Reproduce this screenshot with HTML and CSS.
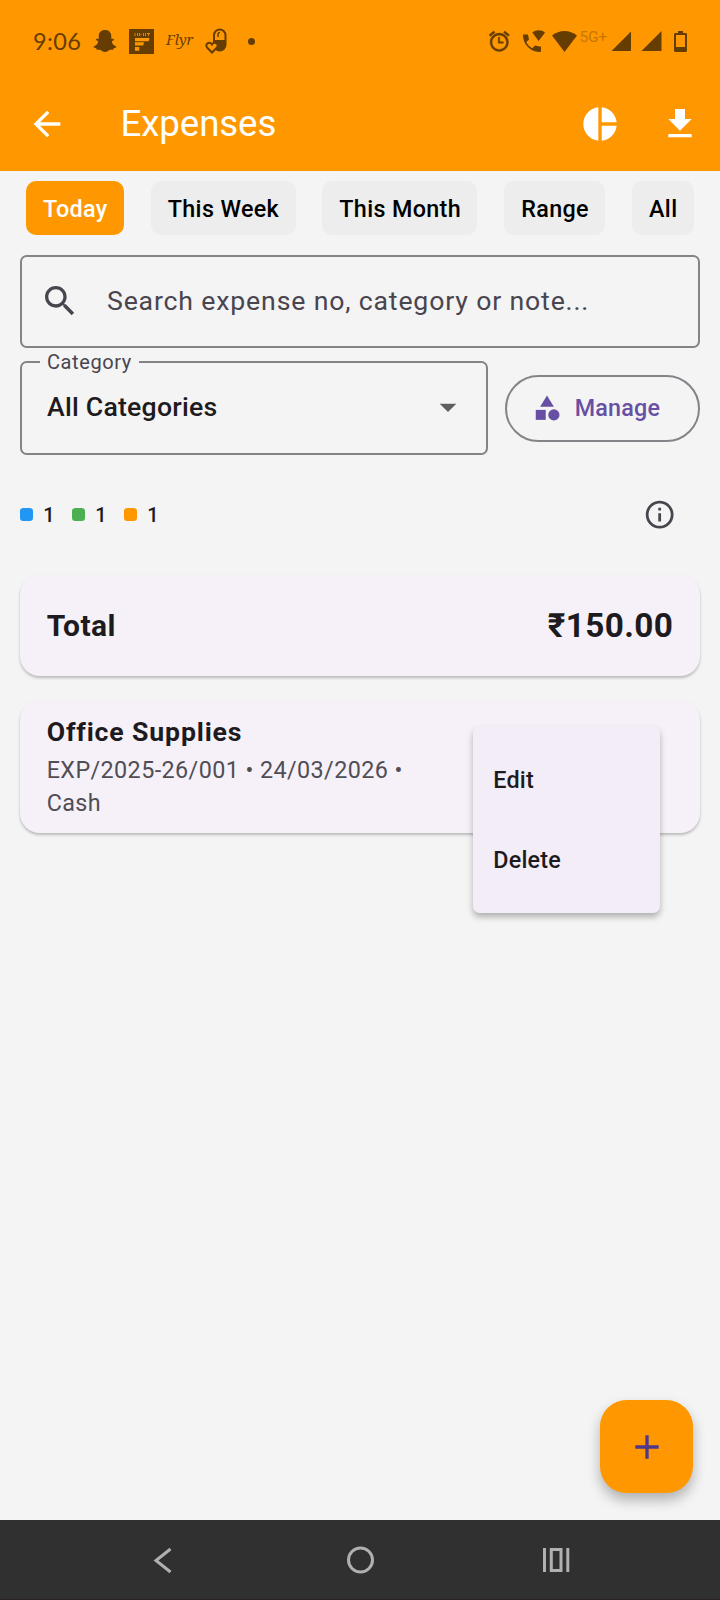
FILE: index.html
```html
<!DOCTYPE html>
<html lang="en">
<head>
<meta charset="utf-8">
<title>Expenses</title>
<link rel="stylesheet" href="styles.css">
</head>
<body>
<div class="screen">
  <header class="top">
    <div class="status">
      <div class="status-left">
        <span class="clock">9:06</span>
        <svg class="ghost" width="24" height="24" viewBox="0 0 24 24"><path d="M12 1c-4 0-6.300 2.700-6.300 6.300v2.500c-1 .5-2.200-.5-2.700.4-.5 1 1.800 1.500 2.100 2.400.4 1.500-2 4.200-4.300 4.800-.8.400-.2 1.200 2.300 1.900.5.200.2 1.400 1 1.500.8.100 2-.3 3.300.2 1.400.600 2.200 2 4.600 2s3.200-1.400 4.600-2c1.300-.5 2.500-.1 3.300-.2.800-.1.500-1.300 1-1.500 2.500-.7 3.100-1.500 2.300-1.900-2.300-.6-4.700-3.300-4.300-4.800.3-.9 2.600-1.400 2.100-2.400-.5-.9-1.700.1-2.700-.4V7.300C18.300 3.700 16 1 12 1z"/></svg>
        <svg class="first" width="25" height="25" viewBox="0 0 25 25"><path d="M0 0h25v25H0z"/><path class="cut" d="M6 9h14.500l-.8 3.300H6zM6 13.300h9l-.8 3.200H6zM6 18h4.200v3.700H6z"/><path class="teeth" d="M6 4v3M8.500 4v3M10.500 4v3M11.500 5.500h1M14.500 4v3M16.500 4v3M18 4.500h3M19.500 4v3"/></svg>
        <span class="flyr">Flyr</span>
        <svg class="pill" width="22" height="26" viewBox="0 0 22 26"><rect class="line" x="9" y="1.500" width="11.500" height="21" rx="5.700"/><path d="M9 12h11.500v5c0 8-11.500 8-11.500 0z"/><path class="thin" d="M13 9V6.500q0-2 2-2"/><path class="heart" d="M7 24.500l-5-5c-2.500-3.500 2.500-6.500 5-3 2.500-3.500 7.500-.5 5 3z"/></svg>
        <i class="dot"></i>
      </div>
      <div class="status-right">
        <svg class="alarm" width="24.500" height="24.500" viewBox="0 0 24 24"><path d="M22 5.720l-4.600-3.860-1.290 1.530 4.600 3.860L22 5.720zM7.880 3.390L6.600 1.860 2 5.710l1.290 1.530 4.590-3.850zM12.500 8H11v6h5v-1.500h-3.500V8zM12 4c-4.970 0-9 4.030-9 9s4.020 9 9 9c4.970 0 9-4.030 9-9s-4.030-9-9-9zm0 16c-3.870 0-7-3.130-7-7s3.130-7 7-7 7 3.130 7 7-3.130 7-7 7z"/></svg>
        <svg class="call" width="23" height="23" viewBox="0 0 23 23"><path d="M1 4.500h5l1 5-2.700 2.500c1.500 3 3.200 4.800 6 6.300l2.700-2.800 6 1.300v5C9 23 .5 14 1 4.500z"/><path d="M10.300 2.500c3.800-3 9-3 12.700 0L16.600 11z"/></svg>
        <svg class="wifi" width="25" height="21" viewBox="0 0 25 21"><path d="M0 4.500c7.500-6 17.500-6 25 0L12.500 21z"/></svg>
        <span class="net">5G+</span>
        <svg class="sig" width="20.500" height="20.500" viewBox="0 0 20 20"><path d="M0 20h20V0z"/></svg>
        <svg class="sig2" width="20.500" height="20.500" viewBox="0 0 20 20"><path d="M0 20h20V0z"/></svg>
        <svg class="battery" width="13" height="21" viewBox="0 0 13 21"><path fill-rule="evenodd" d="M4 0h5v2h3l1 1v17l-1 1H1l-1-1V3l1-1h3zM2 4v12h9V4z"/></svg>
      </div>
    </div>
    <div class="appbar">
      <svg class="icon back" viewBox="0 0 24 24"><path d="M20 11H7.830l5.590-5.590L12 4l-8 8 8 8 1.410-1.410L7.830 13H20v-2z"/></svg>
      <h1 class="title">Expenses</h1>
      <svg class="icon pie" viewBox="0 0 24 24"><path d="M11 2v20c-5.070-.5-9-4.790-9-10s3.930-9.500 9-10zm2.030 0v8.990H22c-.47-4.740-4.240-8.520-8.970-8.990zm0 11.010V22c4.740-.47 8.500-4.250 8.970-8.990h-8.970z"/></svg>
      <svg class="icon" viewBox="0 0 24 24"><path d="M5 20h14v-2H5v2zM19 9h-4V3H9v6H5l7 7 7-7z"/></svg>
    </div>
  </header>

  <main class="content">
    <div class="chips">
      <span class="chip chip-on">Today</span>
      <span class="chip">This Week</span>
      <span class="chip">This Month</span>
      <span class="chip">Range</span>
      <span class="chip">All</span>
    </div>

    <div class="search">
      <svg class="icon" viewBox="0 0 24 24"><path d="M15.500 14h-.79l-.28-.27C15.410 12.590 16 11.110 16 9.500 16 5.910 13.090 3 9.500 3S3 5.910 3 9.500 5.910 16 9.500 16c1.610 0 3.090-.59 4.230-1.570l.27.28v.79l5 4.990L20.490 19l-4.990-5zm-6 0C7.010 14 5 11.990 5 9.500S7.010 5 9.500 5 14 7.010 14 9.500 11.990 14 9.500 14z"/></svg>
      <span class="hint">Search expense no, category or note...</span>
    </div>

    <div class="filters">
      <div class="select">
        <span class="select-label">Category</span>
        <span class="select-value">All Categories</span>
        <svg class="icon" viewBox="0 0 24 24"><path d="M7 10l5 5 5-5z"/></svg>
      </div>
      <div class="manage">
        <svg class="icon-sm" viewBox="0 0 24 24"><path d="M12 2l-5.500 9h11z"/><circle cx="17.500" cy="17.500" r="4.500"/><path d="M3 13.500h8v8H3z"/></svg>
        <span>Manage</span>
      </div>
    </div>

    <div class="legend">
      <span class="key"><i class="swatch blue"></i>1</span>
      <span class="key"><i class="swatch green"></i>1</span>
      <span class="key"><i class="swatch orange"></i>1</span>
      <svg class="info" viewBox="0 0 24 24"><path d="M11 7h2v2h-2zm0 4h2v6h-2zm1-9C6.480 2 2 6.480 2 12s4.480 10 10 10 10-4.480 10-10S17.520 2 12 2zm0 18c-4.410 0-8-3.590-8-8s3.590-8 8-8 8 3.590 8 8-3.590 8-8 8z"/></svg>
    </div>

    <section class="card total">
      <span class="total-label">Total</span>
      <span class="total-sum">₹150.00</span>
    </section>

    <section class="card entry">
      <h2 class="entry-title">Office Supplies</h2>
      <p class="entry-meta">EXP/2025-26/001 • 24/03/2026 • Cash</p>
      <div class="menu">
        <div class="menu-item">Edit</div>
        <div class="menu-item">Delete</div>
      </div>
    </section>
  </main>

  <div class="fab"><svg class="icon" viewBox="0 0 24 24"><path d="M19 13h-6v6h-2v-6H5v-2h6V5h2v6h6v2z"/></svg></div>

  <nav class="nav">
    <svg width="30" height="30" viewBox="0 0 30 30"><path d="M21.500 4L7 15.500 21.500 27"/></svg>
    <svg width="30" height="30" viewBox="0 0 30 30"><circle cx="14.500" cy="15" r="12"/></svg>
    <svg width="30" height="30" viewBox="0 0 30 30"><path d="M2.500 3v24M25.800 3v24M9.300 4.500h9.700v21H9.300z"/></svg>
  </nav>
</div>
</body>
</html>
```
FILE: styles.css
```css
* { box-sizing: border-box; }
body {
  margin: 0;
  font-family: Roboto, "Noto Sans", sans-serif;
  font-size: 23.33px;
  color: #1d1b20;
}
h1, h2, p { margin: 0; }
svg { display: block; flex: none; fill: currentColor; }
.icon { width: 40px; height: 40px; }
.icon-sm { width: 30px; height: 30px; }

.screen {
  position: relative;
  display: flex;
  flex-direction: column;
  width: 720px;
  height: 1600px;
  overflow: hidden;
  background: #f4f4f4;
}

/* Status bar and app bar */
.top { height: 171px; background: #ff9800; flex: none; }
.status {
  display: flex;
  justify-content: space-between;
  height: 78px;
  padding: 4px 33px 0;
  color: #663d00;
}
.status-left, .status-right { display: flex; align-items: center; }
.clock { width: 48px; font: 23.5px Lato, sans-serif; letter-spacing: 0.4px; white-space: nowrap; }
.ghost { margin-left: 12px; }
.first { margin-left: 12px; }
.first .cut { fill: #ff9800; }
.first .teeth { stroke: #ff9800; stroke-width: 0.8; }
.flyr { width: 26px; margin: 0 13px 4px 12px; font: italic 400 14.500px "Noto Serif", "Liberation Serif", serif; }
.pill .line { fill: none; stroke: currentColor; stroke-width: 2; }
.pill .thin { fill: none; stroke: currentColor; stroke-width: 1.500; }
.pill .heart { fill: #ff9800; stroke: currentColor; stroke-width: 2; }
.dot { width: 7px; height: 7px; margin-left: 21px; border-radius: 50%; background: currentColor; }
.alarm { stroke: currentColor; stroke-width: 0.4; }
.call { margin-left: 10px; }
.wifi { margin-left: 7px; }
.net { width: 31px; margin: 0 0 9px 3px; font-size: 15.500px; letter-spacing: -0.3px; color: #c97600; }
.sig2 { margin-left: 10px; }
.battery { margin-left: 12.500px; }

.appbar { display: flex; align-items: center; height: 93px; padding: 0 20px 1px 27px; color: #fff; }
.title { flex: 1; margin: 0 0 0 53.500px; font-size: 36.670px; font-weight: 400; line-height: 46px; letter-spacing: -0.1px; }
.pie { margin-right: 40px; }

/* Filters */
.content { flex: 1; padding: 10px 20px 0; }
.chips { display: flex; justify-content: space-between; padding: 0 6px; }
.chip {
  height: 53.500px;
  padding: 0.500px 16.500px 0 17px;
  border-radius: 10px;
  background: #ededed;
  color: #000;
  font-weight: 500;
  line-height: 55px;
  letter-spacing: 0.34px;
  white-space: nowrap;
}
.chip-on { background: #ff9800; color: #fff; }

.search {
  display: flex;
  align-items: center;
  height: 93px;
  margin-top: 20.500px;
  padding: 0 0 2px 18px;
  border: 2px solid #858388;
  border-radius: 6.670px;
  color: #49454f;
}
.hint { margin-left: 27px; font-size: 26.670px; letter-spacing: 0.83px; white-space: nowrap; }

.filters { display: flex; align-items: center; gap: 17px; margin-top: 13px; }
.select {
  position: relative;
  display: flex;
  align-items: center;
  justify-content: space-between;
  width: 468px;
  height: 93.500px;
  padding: 0 18px 1px 25px;
  border: 2px solid #858388;
  border-radius: 6.670px;
}
.select .icon { color: #5f5f5f; }
.select-label {
  position: absolute;
  top: -13px;
  left: 18px;
  padding: 0 7px;
  background: #f4f4f4;
  color: #49454f;
  font-size: 20px;
  line-height: 25px;
  letter-spacing: 0.6px;
}
.select-value { font-size: 26.670px; font-weight: 500; letter-spacing: 0.22px; }
.manage {
  display: flex;
  align-items: center;
  gap: 13.300px;
  width: 195px;
  height: 66.670px;
  margin-top: 1px;
  padding-left: 24.500px;
  border: 2px solid #858388;
  border-radius: 34px;
  color: #6750a4;
  font-weight: 500;
  letter-spacing: 0.17px;
}

.legend { display: flex; align-items: center; height: 67px; margin-top: 26.500px; padding-right: 23.300px; }
.key { display: flex; align-items: center; gap: 10px; width: 52px; font-size: 20px; font-weight: 500; }
.swatch { width: 13.330px; height: 13.330px; border-radius: 3.330px; }
.blue { background: #2196f3; }
.green { background: #4caf50; }
.orange { background: #ff9800; }
.info { width: 33.330px; height: 33.330px; margin-left: auto; color: #49454f; }

/* Cards */
.card {
  border-radius: 20px;
  background: #f6f1f8;
  box-shadow: 0 2px 3px rgba(0, 0, 0, 0.24);
}
.total {
  display: flex;
  align-items: center;
  justify-content: space-between;
  height: 101px;
  margin-top: 27px;
  padding: 0 26.670px 1px;
  font-weight: 700;
}
.total-label { font-size: 30px; letter-spacing: 0.4px; }
.total-sum { font-size: 33.330px; letter-spacing: 0.4px; }
.entry { position: relative; height: 133px; margin-top: 23.500px; padding: 12px 26.670px; }
.entry-title { font-size: 26.670px; font-weight: 700; line-height: 40px; letter-spacing: 0.85px; }
.entry-meta { width: 380px; margin-top: 2px; color: #504d55; line-height: 33.330px; letter-spacing: 0.42px; }
.menu {
  position: absolute;
  top: 26.500px;
  right: 40px;
  width: 186.670px;
  padding: 14.330px 0 12.330px;
  border-radius: 6.670px;
  background: #f3edf7;
  box-shadow: 0 4px 6px rgba(0, 0, 0, 0.28);
}
.menu-item { height: 80px; padding-left: 20px; font-weight: 500; line-height: 80px; letter-spacing: 0.17px; }

.fab {
  position: absolute;
  right: 26.670px;
  bottom: 106.670px;
  display: grid;
  place-items: center;
  width: 93.330px;
  height: 93.330px;
  border-radius: 26.670px;
  background: #ff9800;
  color: #4f378b;
  box-shadow: 0 7px 13px rgba(0, 0, 0, 0.28);
}

.nav {
  position: relative;
  display: flex;
  align-items: center;
  justify-content: space-between;
  height: 80px;
  padding: 0 148px 0 149px;
  border-bottom: 1px solid #2b2229;
  background: #303030;
}
.nav svg { fill: none; stroke: #b0b0b0; stroke-width: 3; }
```
